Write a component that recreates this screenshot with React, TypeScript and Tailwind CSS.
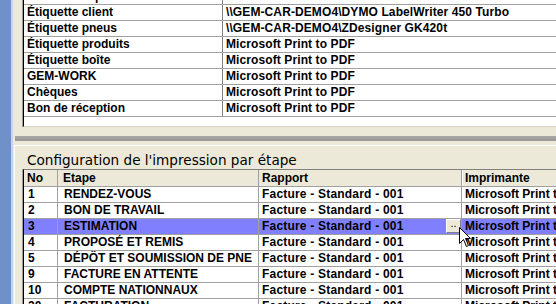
import React from "react";

const printers = [
  { name: "Facture coupon", printer: "Microsoft Print to PDF" },
  { name: "Étiquette client", printer: "\\\\GEM-CAR-DEMO4\\DYMO LabelWriter 450 Turbo" },
  { name: "Étiquette pneus", printer: "\\\\GEM-CAR-DEMO4\\ZDesigner GK420t" },
  { name: "Étiquette produits", printer: "Microsoft Print to PDF" },
  { name: "Étiquette boîte", printer: "Microsoft Print to PDF" },
  { name: "GEM-WORK", printer: "Microsoft Print to PDF" },
  { name: "Chèques", printer: "Microsoft Print to PDF" },
  { name: "Bon de réception", printer: "Microsoft Print to PDF" },
];

const steps = [
  { no: "1", etape: "RENDEZ-VOUS" },
  { no: "2", etape: "BON DE TRAVAIL" },
  { no: "3", etape: "ESTIMATION" },
  { no: "4", etape: "PROPOSÉ ET REMIS" },
  { no: "5", etape: "DÉPÔT ET SOUMISSION DE PNE" },
  { no: "9", etape: "FACTURE EN ATTENTE" },
  { no: "10", etape: "COMPTE NATIONNAUX" },
  { no: "20", etape: "FACTURATION" },
];

const SELECTED = "3";

function Cursor() {
  return (
    <svg width="13" height="21" viewBox="0 0 13 21" className="absolute left-[459px] top-[227px]">
      <path
        d="M0.5 0.5 L0.5 16.5 L4.5 12.5 L7.5 19.5 L9.5 18.5 L6.5 11.5 L11.5 11.5 Z"
        fill="#fff"
        stroke="#000"
        strokeWidth="1"
        strokeLinejoin="miter"
      />
    </svg>
  );
}

export default function App() {
  return (
    <div className="relative flex h-[304px] w-[556px] overflow-hidden bg-[#ece9d8] font-['Liberation_Sans',Arial,sans-serif] text-[12px] font-bold text-black">
      {/* window edge */}
      <div className="w-[11px] shrink-0 bg-[#6f90c8]" />
      <div className="w-[2px] shrink-0 bg-[#c8d4ea]" />

      <div className="flex min-w-0 flex-1 flex-col">
        {/* printers per document */}
        <div className="flex h-[127px] shrink-0 pl-[9px]">
          <div className="w-px bg-[#a0a0a0]" />
          <div className="min-w-0 flex-1 overflow-hidden border-b border-l border-b-[#d8d4c8] border-l-black bg-white">
            <div className="-mt-[11px]">
              {printers.map((p) => (
                <div key={p.name} className="flex h-4 border-b border-[#a0a0a0] leading-[15px]">
                  <div className="w-[199px] shrink-0 truncate border-r border-[#808080] pl-[3px]">{p.name}</div>
                  <div className="flex-1 truncate whitespace-nowrap pl-[3px] tracking-[0.1px]">{p.printer}</div>
                </div>
              ))}
            </div>
          </div>
        </div>

        <div className="h-[9px] shrink-0" />
        {/* splitter */}
        <div className="ml-[2px] h-[5px] shrink-0 bg-gradient-to-b from-[#a8a8a8] to-[#989898]" />
        <div className="h-[4px] shrink-0" />

        {/* config par étape */}
        <div className="ml-px flex min-h-0 flex-1 flex-col border-l border-t border-white">
          <div className="flex h-[23px] shrink-0 items-end pb-[1px] pl-[12px] font-['DejaVu_Sans',Verdana,sans-serif] text-[13.6px] font-normal leading-[16px]">
            Configuration de l'impression par étape
          </div>
          <div className="flex min-h-0 flex-1 pl-[7px]">
            <div className="w-px bg-[#a0a0a0]" />
            <div className="min-w-0 flex-1 overflow-hidden border-l border-t border-l-black border-t-[#808080] bg-white">
              {/* header */}
              <div className="flex h-[17px] border-b border-[#a0a0a0] bg-[#ece9d8] leading-[16px]">
                <div className="w-[34px] shrink-0 border-r border-[#a0a0a0] pl-[3px]">No</div>
                <div className="w-[201px] shrink-0 border-r border-[#a0a0a0] pl-[5px]">Etape</div>
                <div className="w-[203px] shrink-0 border-r border-[#a0a0a0] pl-[3px]">Rapport</div>
                <div className="flex-1 border-l border-white pl-[2px]">Imprimante</div>
              </div>
              {steps.map((s) => (
                <div
                  key={s.no}
                  className={`flex h-4 border-b border-[#a0a0a0] leading-[15px] ${s.no === SELECTED ? "bg-[#8080ff]" : ""}`}
                >
                  <div className="w-[34px] shrink-0 border-r border-[#a0a0a0] pl-[4px]">{s.no}</div>
                  <div className="w-[201px] shrink-0 truncate border-r border-[#a0a0a0] pl-[6px]">{s.etape}</div>
                  <div className="w-[203px] shrink-0 border-r border-[#a0a0a0] pl-[3px] tracking-[0.2px]">Facture - Standard - 001</div>
                  <div className="flex-1 whitespace-nowrap pl-[3px]">Microsoft Print to PDF</div>
                </div>
              ))}
            </div>
          </div>
        </div>
      </div>

      {/* ellipsis button on the selected row */}
      <div className="absolute left-[446px] top-[219px] flex h-[14px] w-[15px] justify-center border border-b-[#808080] border-l-white border-r-[#808080] border-t-white bg-[#ece9d8] text-[11px] font-normal leading-[6px]">
        ..
      </div>
      <Cursor />
    </div>
  );
}
